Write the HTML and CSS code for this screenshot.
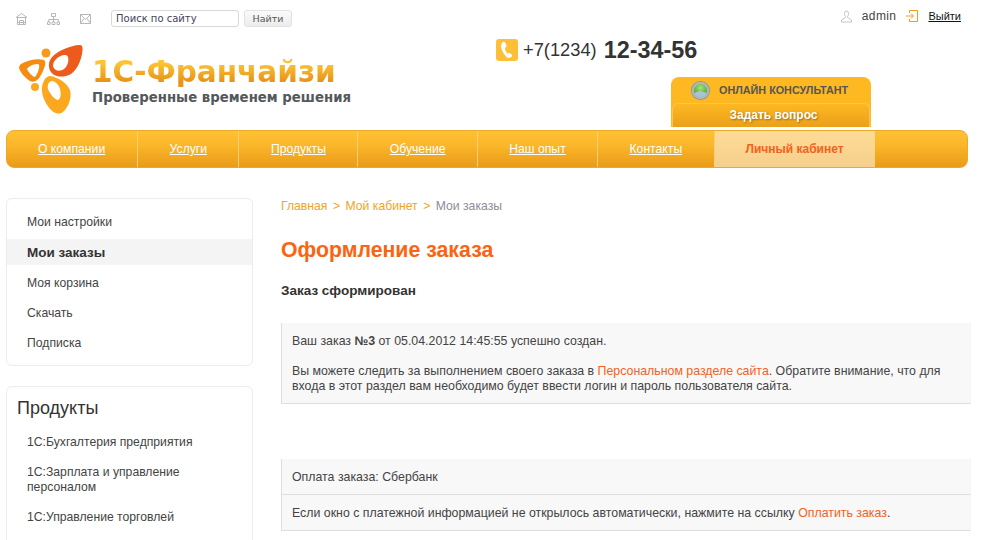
FILE: index.html
```html
<!DOCTYPE html>
<html lang="en">
<head>
    <meta charset="UTF-8">
    <title>1С-Франчайзи</title>
    <link rel="stylesheet" href="styles.css">
</head>
<body>
    <header class="site-header">
        <div class="header-left">
            <div class="tools">
                <a class="tool-icon" href="#">
                    <svg width="11" height="12" viewBox="0 0 11 12" fill="none" stroke="#b8b8b8" stroke-width="1"><path d="M0 4.500 5.500.5 11 4.500M.5 4.500h10M1.500 4.500v7h8v-7M3.500 11.500v-4h4v4M1.500 9.500h8"/></svg>
                </a>
                <a class="tool-icon" href="#">
                    <svg width="13" height="12" viewBox="0 0 13 12" fill="none" stroke="#b8b8b8" stroke-width="1"><path d="M4.500.5h4v3h-4zM.5 9h2.500v2.500H.5zM5 9h3v2.500H5zM10 9h2.500v2.500H10zM6.500 3.500V9M1.700 9V6.500h9.600V9"/></svg>
                </a>
                <a class="tool-icon" href="#">
                    <svg width="11" height="10" viewBox="0 0 11 10" fill="none" stroke="#b8b8b8" stroke-width="1"><path d="M.5.5h10v9H.5zM.5.500 5.500 5.500 10.500.5M.5 9.500 4 4.500M10.500 9.500 7 4.500"/></svg>
                </a>
                <form class="search">
                    <input class="search-input" type="text" value="Поиск по сайту">
                    <button class="search-btn" type="button">Найти</button>
                </form>
            </div>
            <a class="logo" href="#">
                <svg class="logo-mark" width="66" height="71" viewBox="0 0 66 71">
                    <path fill="#ee5a1c" fill-rule="evenodd" d="M62 1C65 1 65 5 64 10 62 20 57 30 48 32 40 34 32 31 31 23 30 15 36 10 44 6 50 3 57 1 62 1zM46 11C40 12 35 17 35 22 36 27 42 28 46 25 50 22 51 16 50 13 49 11 48 11 46 11z"/>
                    <circle cx="28" cy="9" r="4.500" fill="#f79a1a"/>
                    <path fill="#f68b12" fill-rule="evenodd" d="M3 20C10 16 20 14 26 16 29 18 26 26 23 31 20 37 16 39 12 37 7 34 2 28 1 24 1 22 2 21 3 20zM19 20C15 20 10 23 9 25 10 28 15 33 17 33 19 31 22 24 21 21 21 20 20 20 19 20z"/>
                    <circle cx="17" cy="43" r="4" fill="#f9a91f"/>
                    <path fill="#fba81f" fill-rule="evenodd" d="M32 32C40 33 49 39 52 46 54 53 51 62 46 67 42 71 37 70 33 66 28 60 23 52 24 43 25 37 28 32 32 32zM34 37C31 37 29 41 30 45 32 50 37 56 40 56 43 55 43 49 42 45 41 41 37 37 34 37z"/>
                </svg>
                <div class="logo-text">
                    <div class="logo-title">1С-Франчайзи</div>
                    <div class="logo-slogan">Проверенные временем решения</div>
                </div>
            </a>
        </div>
        <div class="header-right">
            <div class="user-line">
                <svg width="13" height="13" viewBox="0 0 13 13" fill="none" stroke="#c4c4c4" stroke-width="1"><path d="M4.500 3.500a2 2.500 0 1 1 4 0c0 1.500-.5 2.500-1 3v1l4 2.500v2h-10v-2l4-2.500v-1c-.5-.5-1-1.500-1-3z"/></svg>
                <span class="user-name">admin</span>
                <svg width="12" height="12" viewBox="0 0 12 12" fill="none" stroke="#f09a25" stroke-width="1"><path d="M3.500 3V.5h8v11h-8V9M0 6h7M5 3.500 7.500 6 5 8.500"/></svg>
                <a class="logout" href="#">Выйти</a>
            </div>
            <div class="phone">
                <span class="phone-icon">
                    <svg width="14" height="18" viewBox="0 0 14 18"><path fill="#fff" d="M3 1c1-.5 2 0 2.500 1l1 3c0 1-1 1.500-1.500 2 0 2 1 4 2.500 5.500.8-.3 1.500-.8 2.300-.4l2.200 2c.5.800 0 1.500-.8 2-1.500 1-3.200 1.200-4.700-.1C3.500 13 1.500 9 1 5.500 1 3.500 1.800 2 3 1z"/></svg>
                </span>
                <span class="phone-code">+7(1234)</span>
                <span class="phone-num">12-34-56</span>
            </div>
            <div class="consultant">
                <div class="consultant-head">
                    <span class="orb"></span>
                    <span>ОНЛАЙН КОНСУЛЬТАНТ</span>
                </div>
                <a class="consultant-btn" href="#">Задать вопрос</a>
            </div>
        </div>
    </header>

    <nav class="main-nav">
        <a href="#">О компании</a>
        <a href="#">Услуги</a>
        <a href="#">Продукты</a>
        <a href="#">Обучение</a>
        <a href="#">Наш опыт</a>
        <a href="#">Контакты</a>
        <a class="active" href="#">Личный кабинет</a>
    </nav>

    <div class="page">
        <aside class="sidebar">
            <div class="side-box account-box">
                <a class="side-link" href="#">Мои настройки</a>
                <a class="side-link current" href="#">Мои заказы</a>
                <a class="side-link" href="#">Моя корзина</a>
                <a class="side-link" href="#">Скачать</a>
                <a class="side-link" href="#">Подписка</a>
            </div>
            <div class="side-box products-box">
                <h3>Продукты</h3>
                <a class="product-link" href="#">1С:Бухгалтерия предприятия</a>
                <a class="product-link" href="#">1С:Зарплата и управление персоналом</a>
                <a class="product-link" href="#">1С:Управление торговлей</a>
            </div>
        </aside>

        <main class="content">
            <div class="breadcrumbs">
                <a href="#">Главная</a><span class="sep">&gt;</span><a href="#">Мой кабинет</a><span class="sep">&gt;</span><span class="here">Мои заказы</span>
            </div>
            <h1>Оформление заказа</h1>
            <p class="order-state">Заказ сформирован</p>

            <div class="note note-first">
                <p>Ваш заказ <b>№3</b> от 05.04.2012 14:45:55 успешно создан.</p>
                <p>Вы можете следить за выполнением своего заказа в <a href="#">Персональном разделе сайта</a>. Обратите внимание, что для входа в этот раздел вам необходимо будет ввести логин и пароль пользователя сайта.</p>
            </div>

            <div class="note pay-row">Оплата заказа: Сбербанк</div>
            <div class="note pay-row pay-link">Если окно с платежной информацией не открылось автоматически, нажмите на ссылку <a href="#">Оплатить заказ</a>.</div>
        </main>
    </div>
</body>
</html>
```

FILE: styles.css
```css
* {
    margin: 0;
    padding: 0;
    box-sizing: border-box;
}

html, body {
    height: 540px;
    overflow: hidden;
}

body {
    font-family: "Liberation Sans", Arial, sans-serif;
    font-size: 12.2px;
    color: #444;
    background-color: #fff;
}

a {
    color: inherit;
    text-decoration: none;
}

/* Header */
.site-header {
    display: flex;
    height: 130px;
}

.header-left {
    width: 496px;
    padding-top: 10px;
}

.tools {
    display: flex;
    align-items: center;
    gap: 20px;
    height: 17px;
    padding-left: 16px;
}

.tool-icon {
    display: flex;
}

.search {
    display: flex;
}

.search-input {
    width: 128px;
    height: 17px;
    padding: 0 4px;
    border: 1px solid #d8d8d8;
    border-radius: 3px;
    font: 10px "DejaVu Sans", sans-serif;
    color: #445;
}

.search-btn {
    width: 48px;
    height: 17px;
    margin-left: 5px;
    border: 1px solid #e2e2e2;
    border-radius: 3px;
    background: linear-gradient(#fafafa, #ececec);
    font: 9.500px "DejaVu Sans", sans-serif;
    color: #555;
}

.logo {
    display: flex;
    align-items: flex-start;
    margin: 17px 0 0 18px;
}

.logo-text {
    margin: 13px 0 0 8px;
}

.logo-title {
    font: bold 29.500px/30px "DejaVu Sans", sans-serif;
    background: linear-gradient(#fcc433 20%, #e8941a 80%);
    -webkit-background-clip: text;
    background-clip: text;
    color: transparent;
}

.logo-slogan {
    margin-top: 3px;
    font: bold 13.300px/16px "DejaVu Sans", sans-serif;
    color: #55585b;
}

.header-right {
    flex: 1;
    padding-top: 8px;
}

.user-line {
    display: flex;
    align-items: center;
    height: 16px;
    padding-right: 24px;
    justify-content: flex-end;
}

.user-name {
    margin: 0 10px 0 9px;
    font-size: 12px;
    color: #444;
    letter-spacing: .4px;
}

.logout {
    margin-left: 10px;
    font-size: 11px;
    color: #111;
    text-decoration: underline;
}

.phone {
    display: flex;
    align-items: center;
    height: 24px;
    margin-top: 14px;
}

.phone-icon {
    display: flex;
    align-items: center;
    justify-content: center;
    width: 22px;
    height: 22px;
    border-radius: 3px;
    background-color: #fdbf36;
}

.phone-code {
    margin-left: 5px;
    font-size: 18.300px;
    color: #333;
}

.phone-num {
    margin-left: 7px;
    font-size: 23.400px;
    font-weight: bold;
    color: #333;
}

.consultant {
    width: 200px;
    height: 50px;
    margin: 15px 0 0 175px;
    padding: 0 1px;
    border-radius: 8px 8px 0 0;
    background-color: #fdb822;
}

.consultant-head {
    display: flex;
    align-items: center;
    gap: 10px;
    height: 26px;
    padding-left: 20px;
    font-size: 10.800px;
    font-weight: bold;
    color: #555;
}

.orb {
    width: 17px;
    height: 17px;
    border: 2px solid #a9b9c1;
    border-radius: 50%;
    background:
        radial-gradient(ellipse 55% 30% at 50% 85%, #a9c2d6 90%, transparent),
        radial-gradient(circle at 50% 30%, #a8e478, #4fa82a 70%);
    box-shadow: 0 0 0 1px #7f98a6;
}

.consultant-btn {
    display: block;
    height: 24px;
    padding-left: 5px;
    border: 1px solid #fcc64a;
    border-bottom: 0;
    border-radius: 6px 6px 0 0;
    background: linear-gradient(#fdb822, #eb9f1a);
    text-align: center;
    line-height: 23px;
    font-size: 12px;
    font-weight: bold;
    color: #fff;
    text-shadow: 1px 1px 2px #9a6a10;
}

/* Main menu */
.main-nav {
    display: flex;
    width: 962px;
    height: 38px;
    margin-left: 6px;
    border: 1px solid #ecaa2c;
    border-radius: 8px;
    background: linear-gradient(#fec133, #fbb62a 40%, #e99b18);
}

.main-nav a {
    padding: 0 31.400px;
    border-right: 1px solid #f8cf72;
    line-height: 36px;
    color: #fff;
    text-decoration: underline;
}

.main-nav a:first-child {
    padding-left: 31px;
    padding-right: 32px;
}

.main-nav a.active {
    width: 160px;
    padding: 0;
    border-right: 0;
    background: linear-gradient(#fddc96, #f5cf8c);
    text-align: center;
    font-size: 12px;
    font-weight: bold;
    color: #f4611c;
    text-decoration: none;
}

/* Columns */
.page {
    display: flex;
    height: 410px;
    padding: 30px 0 0 6px;
    overflow: hidden;
}

.sidebar {
    width: 247px;
}

.side-box {
    border: 1px solid #ececec;
    border-radius: 6px;
}

.account-box {
    padding: 8px 0 7px;
}

.side-link {
    display: block;
    height: 30px;
    padding-left: 20px;
    line-height: 30px;
    color: #444;
}

.side-link.current {
    height: 26px;
    margin: 2px 0 3px;
    background-color: #f4f4f4;
    line-height: 27px;
    font-size: 13.500px;
    font-weight: bold;
    color: #333;
}

.products-box {
    margin-top: 20px;
    padding: 11px 10px 30px;
}

.products-box h3 {
    margin-bottom: 16px;
    font-size: 18px;
    font-weight: normal;
    color: #333;
}

.product-link {
    display: block;
    margin-bottom: 15px;
    padding-left: 10px;
    line-height: 15px;
    color: #444;
}

.content {
    width: 690px;
    margin-left: 28px;
}

.breadcrumbs {
    margin-top: 1px;
    color: #f0a526;
}

.breadcrumbs .sep {
    margin: 0 5.500px;
}

.breadcrumbs .here {
    color: #8d8d99;
}

h1 {
    margin-top: 25px;
    font-size: 21.300px;
    line-height: 24px;
    color: #fb6410;
}

.order-state {
    margin-top: 22px;
    font-size: 13.500px;
    line-height: 14px;
    font-weight: bold;
    color: #333;
}

.note {
    padding: 0 10px;
    border-left: 1px solid #dedede;
    border-bottom: 1px solid #dedede;
    border-right: 1px solid #f4f4f4;
    background-color: #f8f8f8;
    font-size: 12.350px;
    line-height: 15px;
}

.note a {
    color: #f4611c;
}

.note-first {
    margin-top: 25px;
    padding-top: 11px;
    padding-bottom: 9px;
}

.note-first p + p {
    margin-top: 15px;
}

.pay-row {
    height: 36px;
    line-height: 37px;
}

.note-first + .pay-row {
    margin-top: 55px;
}
```
